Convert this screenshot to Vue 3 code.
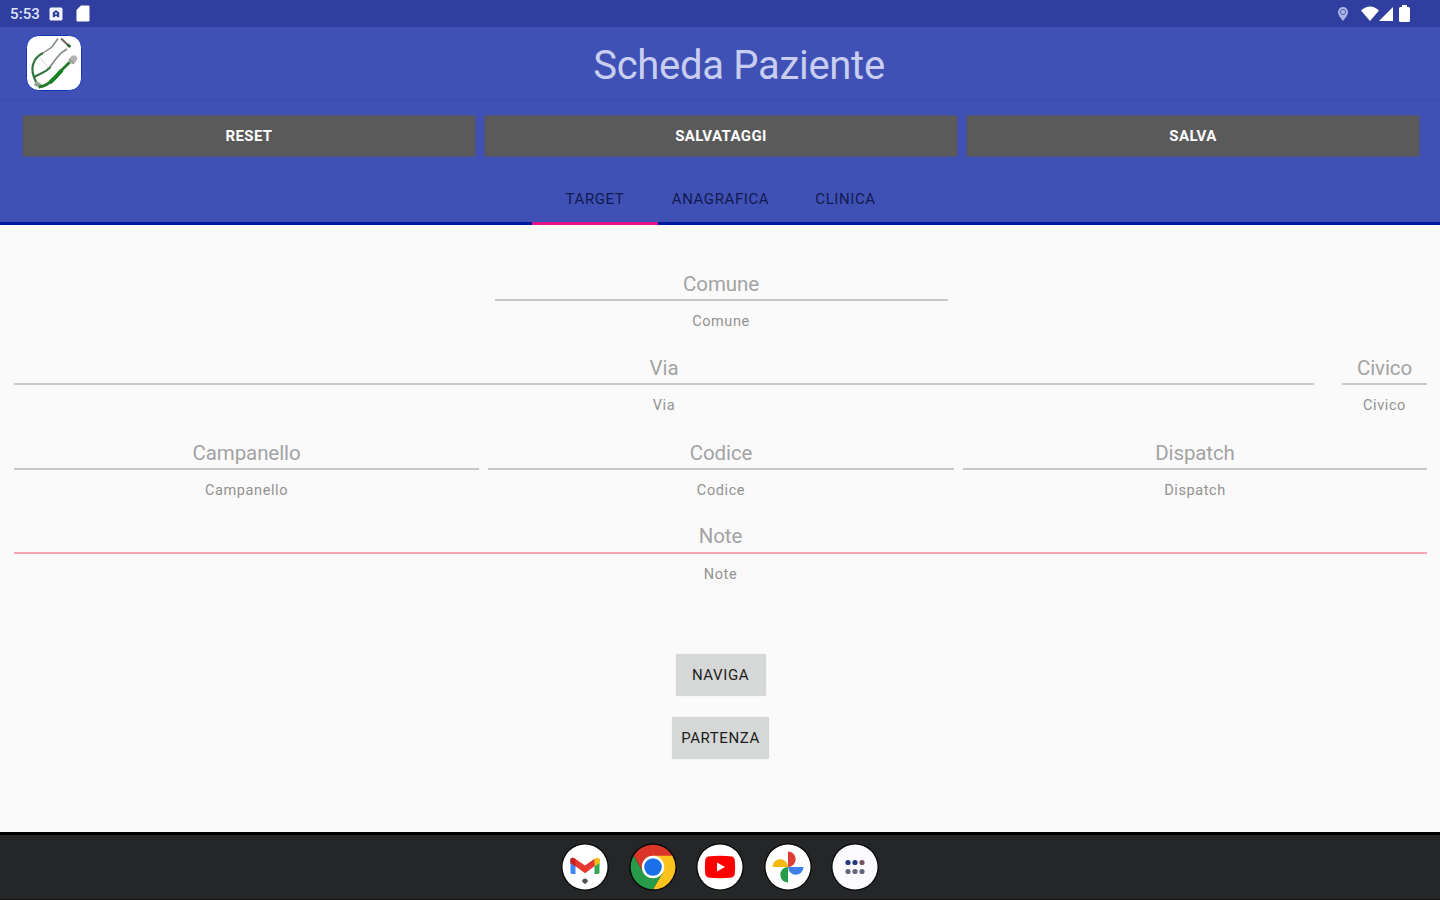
<script setup>
const actions = ['RESET', 'SALVATAGGI', 'SALVA']
const tabs = ['TARGET', 'ANAGRAFICA', 'CLINICA']
const rows = [
  { kind: 'single', fields: ['Comune'] },
  { kind: 'street', fields: ['Via', 'Civico'] },
  { kind: 'triple', fields: ['Campanello', 'Codice', 'Dispatch'] },
  { kind: 'full', fields: ['Note'] },
]
const dots = [[16, 18.5], [23, 18.5], [30, 18.5], [16, 27.5], [23, 27.5], [30, 27.5]]
</script>

<template>
  <div class="screen">
    <div class="status">
      <span class="clock">5:53</span>
      <svg class="st-app" width="14" height="14" viewBox="0 0 14 14">
        <rect x=".5" y=".5" width="13" height="13" rx="1.5" fill="#f4f5fc" />
        <path d="M3.800 10.200V5.400L7 3l3.200 2.400v4.800H8.600L7 8.400l-1.600 1.800z" fill="#303f9f" />
        <circle cx="7" cy="6.600" r="1" fill="#f4f5fc" />
      </svg>
      <svg class="st-sd" width="14" height="17" viewBox="0 0 14 17">
        <path d="M5 .5h7.200q1.300 0 1.300 1.300v13.400q0 1.300-1.300 1.300H1.800Q.5 16.500 .5 15.200V5z" fill="#fff" />
      </svg>
      <span class="grow"></span>
      <svg class="st-pin" width="12" height="16" viewBox="0 0 12 16">
        <path d="M6 1a5 5 0 0 0-5 5c0 3.600 5 9 5 9s5-5.400 5-9a5 5 0 0 0-5-5z" fill="#aab4e4" />
        <circle cx="6" cy="6" r="2.600" fill="none" stroke="#5664b8" stroke-width="1" />
      </svg>
      <svg class="st-wifi" width="18" height="15" viewBox="0 0 18 15">
        <path d="M0 4.500Q9-3.500 18 4.500L9 15z" fill="#fff" />
      </svg>
      <svg class="st-cell" width="14" height="14" viewBox="0 0 14 14">
        <path d="M14 0v14H0z" fill="#fff" />
      </svg>
      <svg class="st-batt" width="11" height="17" viewBox="0 0 11 17">
        <path d="M3 0h5v2h1.500Q11 2 11 3.500v12Q11 17 9.500 17h-8Q0 17 0 15.500v-12Q0 2 1.500 2H3z" fill="#fff" />
      </svg>
    </div>

    <header class="appbar">
      <svg class="logo" width="56" height="56" viewBox="0 0 56 56">
        <rect x=".5" y=".5" width="55" height="55" rx="12" fill="#fff" stroke="#1733b6" />
        <path d="M32 3.500L26 12L17 18" fill="none" stroke="#7d8880" stroke-width="1.500" />
        <path d="M41 14L35 18L29 25L24 32" fill="none" stroke="#7d8880" stroke-width="1.600" />
        <path d="M17 18Q11 21 8.500 26Q4.500 33 8 42Q10 49 15 51.500" fill="none" stroke="#2f7440" stroke-width="2.200" />
        <path d="M8 42L16 38Q21 36 24.500 32" fill="none" stroke="#2f7440" stroke-width="2" />
        <path d="M14 22l8 11" stroke="#d5d9d5" fill="none" />
        <path d="M35 3.500l8 7.500" stroke="#76695f" stroke-width="2.200" />
        <path d="M41.500 9.500l3 2.500" stroke="#276337" stroke-width="2.600" />
        <path d="M9 48L15 51.500" fill="none" stroke="#8fa791" stroke-width="4.500" />
        <path d="M13 52Q21 51 29 43Q36 34 45 26" fill="none" stroke="#257a2e" stroke-width="3" />
        <path d="M24 47.500Q30 42 36 35" fill="none" stroke="#178122" stroke-width="4" />
        <ellipse cx="47" cy="24.500" rx="4.500" ry="3.500" transform="rotate(-45 47 24.500)" fill="#b0b3b0" />
        <path d="M43 24l5 5" stroke="#8f958f" stroke-width="1.200" />
      </svg>
      <h1>Scheda Paziente</h1>
    </header>

    <section class="toolbar">
      <div class="actions">
        <button v-for="a in actions" :key="a" class="action" :class="a.toLowerCase()">{{ a }}</button>
      </div>
      <nav class="tabs">
        <div v-for="(t, i) in tabs" :key="t" class="tab" :class="[t.toLowerCase(), { active: i === 0 }]">{{ t }}</div>
      </nav>
    </section>

    <main>
      <div v-for="r in rows" :key="r.kind" class="row" :class="r.kind">
        <div v-for="f in r.fields" :key="f" class="field">
          <div class="value"><span>{{ f }}</span></div>
          <div class="hint"><span>{{ f }}</span></div>
        </div>
      </div>
      <div class="buttons">
        <button class="btn naviga">NAVIGA</button>
        <button class="btn partenza">PARTENZA</button>
      </div>
    </main>

    <footer class="dock">
      <svg width="48" height="48" viewBox="-1 -1 48 48">
        <circle cx="23" cy="23" r="23.800" fill="#08090a" /><circle cx="23" cy="23" r="22.500" fill="#fff" />
        <path d="M8.500 14.500L13.500 18v12H10.500Q8.500 30 8.500 28.500z" fill="#4285f4" />
        <path d="M37.500 14.500L32.500 18v12h3Q37.500 30 37.500 28.500z" fill="#34a853" />
        <path d="M32.500 15.200l1.500-1.200q3.500-1.300 3.500 2V19l-5 3.500z" fill="#fbbc04" />
        <path d="M8.500 19v-3q0-3.500 4-1.800L23 21.500l9.500-6.800v7.500L23 29.300l-9.500-7z" fill="#e5392f" />
        <path d="M8.500 19v-3q0-3.500 4-1.600l1 .8v7.200z" fill="#c5221f" />
        <path d="M19.500 36.500h7L23 40z" fill="#444" /><circle cx="23" cy="37" r="2.400" fill="#555" />
      </svg>
      <svg width="48" height="48" viewBox="-1 -1 48 48">
        <circle cx="23" cy="23" r="23.800" fill="#08090a" />
        <path d="M23 23L13.300 28.600L3.700 11.850A22.300 22.300 0 0 1 42.300 11.850z" fill="#db3429" />
        <path d="M23 11.800H42.300A22.300 22.300 0 0 1 23 45.300L32.700 28.600z" fill="#fcc31e" />
        <path d="M3.700 11.850L13.300 28.600L23 30L32.700 28.600L23 45.300A22.300 22.300 0 0 1 3.700 11.850z" fill="#279b49" />
        <circle cx="23" cy="23" r="11.200" fill="#fff" /><circle cx="23" cy="23" r="8.800" fill="#1a70e8" />
      </svg>
      <svg width="48" height="48" viewBox="-1 -1 48 48">
        <circle cx="23" cy="23" r="23.800" fill="#08090a" /><circle cx="23" cy="23" r="22.500" fill="#fff" />
        <path d="M11 12.500Q23 11 35 12.500Q37.500 13 37.800 16Q38.500 23 37.800 30Q37.500 33 35 33.500Q23 35 11 33.500Q8.500 33 8.200 30Q7.500 23 8.200 16Q8.500 13 11 12.500z" fill="#f00" />
        <path d="M20 18.500l8 4.500-8 4.500z" fill="#fff" />
      </svg>
      <svg width="48" height="48" viewBox="-1 -1 48 48">
        <circle cx="23" cy="23" r="23.800" fill="#08090a" /><circle cx="23" cy="23" r="22.500" fill="#fff" />
        <path d="M23 7.500a7.700 7.700 0 0 1 0 15.400z" fill="#de3e35" />
        <path d="M38.500 23a7.700 7.700 0 0 1-15.400 0z" fill="#3d80ee" />
        <path d="M23 38.500a7.700 7.700 0 0 1 0-15.400z" fill="#279d4c" />
        <path d="M7.500 23a7.700 7.700 0 0 1 15.400 0z" fill="#f6b912" />
      </svg>
      <svg width="48" height="48" viewBox="-1 -1 48 48">
        <circle cx="23" cy="23" r="23.800" fill="#08090a" /><circle cx="23" cy="23" r="22.500" fill="#fbfbff" />
        <circle v-for="(d, i) in dots" :key="i" :cx="d[0]" :cy="d[1]" r="2.600" :fill="i < 2 ? '#26377f' : i === 2 ? '#74525f' : '#62677a'" />
      </svg>
    </footer>
  </div>
</template>

<style>
body { margin: 0; overflow: hidden; }
</style>

<style scoped>
.screen { width: 1440px; height: 900px; display: flex; flex-direction: column; background: #fafafa; font-family: Roboto, "Liberation Sans", sans-serif; box-sizing: border-box; }
.screen * { box-sizing: border-box; }
button { border: 0; padding: 0; margin: 0; font-family: inherit; }
.status { height: 27px; background: #303f9f; display: flex; align-items: center; padding: 0 30px 0 10px; flex: none; }
.clock { width: 39px; color: #dfe3f8; font-size: 15px; font-weight: 500; line-height: 27px; padding-top: 1px; letter-spacing: .1px; }
.st-sd { margin-left: 13px; }
.grow { flex: 1; }
.st-pin { margin-right: 12px; }
.st-wifi { margin-right: -1px; }
.st-cell { margin: 0 6px 0 1px; }
.appbar { height: 71px; background: #3f51b5; flex: none; display: flex; align-items: center; padding: 0 0 0 26px; }
.logo { flex: none; margin-top: 1px; }
h1 { margin: 6px 0 0; width: 1314px; text-align: center; font-size: 40px; font-weight: 400; line-height: 48px; color: #c9cef0; letter-spacing: -.3px; }
.toolbar { height: 127px; flex: none; background: #3f51b5; border-top: 3px solid #3c4dad; border-bottom: 3px solid #0018a0; padding: 15px 21px 0 23px; display: flex; flex-direction: column; justify-content: space-between; }
.actions { display: grid; grid-template-columns: 452px 472px 452px; justify-content: space-between; }
.action { height: 40px; background: #5a5a5a; color: #fff; font-size: 15px; font-weight: 700; line-height: 39px; letter-spacing: .4px; box-shadow: 0 0 0 1px #4a5289; }
.tabs { display: flex; justify-content: center; align-self: center; height: 53px; margin-bottom: -3px; position: relative; left: -1px; }
.tab { width: 125px; padding-top: 17px; text-align: center; color: #121a50; font-size: 15px; line-height: 20px; letter-spacing: .6px; }
.tab.active { width: 126px; border-bottom: 3px solid #e8128d; }
main { flex: 1; padding: 43px 13px 0 14px; display: flex; flex-direction: column; }
.row { height: 84.400px; flex: none; display: grid; }
.single { grid-template-columns: 453px; justify-content: center; padding-left: 1px; }
.street { grid-template-columns: 1300px 85px; justify-content: space-between; }
.triple { grid-template-columns: 465px 466px 464px; justify-content: space-between; }
.full { grid-template-columns: 1fr; }
.field { text-align: center; }
.value { height: 33px; border-bottom: 2px solid #c8c8c8; font-size: 20.500px; line-height: 32px; color: #a3a3a3; letter-spacing: -.1px; }
.full .value { border-bottom-color: #f5a6b2; line-height: 31px; }
.hint { height: 20px; margin-top: 10px; font-size: 14.500px; line-height: 21px; color: #929292; letter-spacing: .6px; }
.buttons { display: flex; flex-direction: column; align-items: center; gap: 21px; margin-top: 48px; }
.btn { height: 42px; background: #d6d8d7; color: #202020; font-size: 15px; line-height: 42px; letter-spacing: .6px; border-radius: 2px; box-shadow: 0 0 1px #c4c6c5; }
.naviga { width: 90px; }
.partenza { width: 97px; }
.dock { height: 68px; flex: none; background: #242627; border-top: 3px solid #000; border-bottom: 1px solid #111; display: flex; justify-content: center; align-items: center; gap: 19.500px; padding: 0 0 1px 0; }
</style>
